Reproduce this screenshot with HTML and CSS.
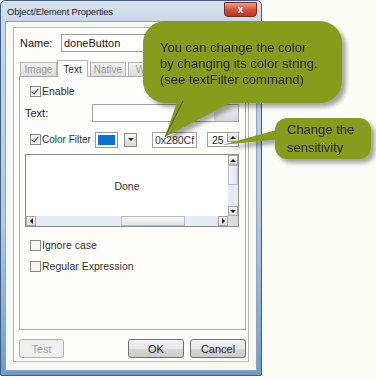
FILE: index.html
```html
<!DOCTYPE html>
<html>
<head>
<meta charset="utf-8">
<link rel="stylesheet" href="styles.css">
</head>
<body>
<div class="window">
  <div class="titlebar">
    <span class="title">Object/Element Properties</span>
    <span class="close">x</span>
  </div>
  <div class="client">
    <div class="panel">
      <div class="name-row">
        <span class="lbl">Name:</span>
        <div class="field name-field">doneButton</div>
      </div>
      <div class="tabs">
        <span class="tab">Image</span>
        <span class="tab active">Text</span>
        <span class="tab">Native</span>
        <span class="tab">Web</span>
      </div>
      <div class="tabpanel">
        <div class="check-row enable"><span class="cb checked"></span>Enable</div>
        <div class="text-row">
          <span class="lbl">Text:</span>
          <div class="field text-field"><span class="browse"></span></div>
        </div>
        <div class="color-row">
          <div class="check-row"><span class="cb checked"></span>Color Filter</div>
          <div class="swatch"><span class="fill"></span></div>
          <div class="dd"><span class="arrow-down"></span></div>
          <div class="field hex">0x280Cf</div>
          <div class="field spin">25<span class="spin-btn"><span class="arrow-up"></span></span></div>
        </div>
        <div class="textarea">
          <div class="ta-main">
            <div class="ta-content">Done</div>
            <div class="vscroll">
              <span class="sbtn"><span class="arrow-up"></span></span>
              <span class="vthumb"></span>
              <span class="vtrack"></span>
              <span class="sbtn"><span class="arrow-down"></span></span>
            </div>
          </div>
          <div class="hscroll">
            <span class="sbtn"><span class="arrow-left"></span></span>
            <span class="htrack1"></span>
            <span class="hthumb"></span>
            <span class="htrack2"></span>
            <span class="sbtn"><span class="arrow-right"></span></span>
            <span class="corner"></span>
          </div>
        </div>
        <div class="check-row ignore"><span class="cb"></span>Ignore case</div>
        <div class="check-row regex"><span class="cb"></span>Regular Expression</div>
      </div>
      <div class="buttons">
        <span class="btn disabled">Test</span>
        <span class="spacer"></span>
        <span class="btn ok">OK</span>
        <span class="btn">Cancel</span>
      </div>
    </div>
  </div>
</div>

<div class="bubble b1">
  <svg class="tail" width="90" height="45" viewBox="0 0 90 45">
    <path d="M35 0 L22 38 L95 0 Z" fill="#879c1d"/>
    <path d="M40 2 L22 38" stroke="#3b4210" stroke-width="0.8" fill="none"/>
  </svg>
  <div class="btext">You can change the color<br>by changing its color string.<br>(see textFilter command)</div>
</div>

<div class="bubble b2">
  <svg class="tail2" width="60" height="25" viewBox="0 0 60 25">
    <path d="M0 20 L58 4 L58 14 Z" fill="#879c1d"/>
  </svg>
  <div class="btext2">Change the<br>sensitivity</div>
</div>
</body>
</html>
```
FILE: styles.css
```css
html, body {
  margin: 0;
  padding: 0;
}
body {
  width: 376px;
  height: 378px;
  background: #fdfdf7;
  position: relative;
  overflow: hidden;
  font-family: "Liberation Sans", Arial, sans-serif;
  font-size: 11px;
  color: #1a1a1a;
}
.window {
  width: 262px;
  height: 376px;
  box-sizing: border-box;
  border: 1px solid #3f5f86;
  border-radius: 5px 5px 2px 2px;
  background: linear-gradient(to bottom, #d9e4ef 0, #c8d7e7 20px, #b3c8e0 60%, #6f99cf 100%);
  display: flex;
  flex-direction: column;
  padding: 0 4px 4px 4px;
}
.titlebar {
  height: 20px;
  display: flex;
  align-items: center;
  justify-content: space-between;
  flex-shrink: 0;
}
.title {
  font-size: 9.5px;
  color: #1d2430;
  padding-left: 2px;
  letter-spacing: -0.2px;
}
.close {
  width: 33px;
  height: 15px;
  margin-top: -4px;
  border: 1px solid #7a2a1a;
  border-radius: 0 0 4px 4px;
  background: linear-gradient(to bottom, #e9a08f 0, #d4553f 50%, #b53520 100%);
  color: #fff;
  font-weight: bold;
  font-size: 10px;
  display: flex;
  align-items: center;
  justify-content: center;
  box-sizing: border-box;
}
.client {
  flex: 1;
  background: #f8f8f3;
  border: 1px solid #8fa5bf;
  padding: 5px 9px 8px 7px;
  display: flex;
}
.panel {
  flex: 1;
  border: 1px solid #b9b9b4;
  background: #fdfdf9;
  padding: 6px 1px 3px 5px;
  display: flex;
  flex-direction: column;
}
.name-row {
  display: flex;
  align-items: center;
  height: 18px;
}
.lbl {
  width: 41px;
  padding-left: 1px;
}
.field {
  border: 1px solid #a2a2a2;
  background: #fff;
  box-sizing: border-box;
  display: flex;
  align-items: center;
  padding-left: 2px;
}
.name-field {
  flex: 1;
  height: 18px;
  margin-right: 2px;
}
.tabs {
  display: flex;
  align-items: flex-end;
  margin-top: 8px;
  height: 16px;
  padding-left: 1px;
}
.tab {
  height: 14px;
  box-sizing: border-box;
  border: 1px solid #b4b4b4;
  border-bottom: none;
  background: linear-gradient(#f1f1f1, #dcdcdc);
  color: #9a9a9a;
  font-size: 10px;
  display: flex;
  align-items: center;
  justify-content: center;
}
.tab:nth-child(1) { width: 37px; }
.tab:nth-child(2) { width: 31px; }
.tab:nth-child(3) { width: 36px; margin-left: 2px; }
.tab:nth-child(4) { width: 36px; margin-left: 2px; }
.tab.active {
  height: 17px;
  background: #fdfdf9;
  color: #333;
  margin-bottom: -1px;
  position: relative;
  z-index: 1;
}
.tabpanel {
  border: 1px solid #a9a9a9;
  height: 254px;
  box-sizing: border-box;
  margin-right: 1px;
  padding: 8px 6px 0 5px;
  display: flex;
  flex-direction: column;
}
.check-row {
  display: flex;
  align-items: center;
  height: 12px;
  font-size: 10.5px;
  color: #333;
  white-space: nowrap;
}
.enable { padding-left: 5px; }
.cb {
  width: 9px;
  height: 9px;
  border: 1px solid #8a8a8a;
  background: #f4f4f4;
  margin-right: 1px;
  position: relative;
  flex-shrink: 0;
}
.cb.checked::after {
  content: "";
  position: absolute;
  left: 2px;
  top: 0px;
  width: 3px;
  height: 6px;
  border: solid #2a4a8a;
  border-width: 0 1.5px 1.5px 0;
  transform: rotate(40deg);
}
.text-row {
  display: flex;
  align-items: center;
  margin-top: 7px;
  height: 18px;
}
.text-row .lbl {
  width: 67px;
  padding-left: 0;
  font-size: 11px;
}
.text-field {
  flex: 1;
  height: 18px;
  justify-content: flex-end;
  padding: 0;
}
.browse {
  width: 24px;
  height: 16px;
  background: linear-gradient(#eee, #d8d8d8);
}
.color-row {
  display: flex;
  align-items: center;
  margin-top: 9px;
  height: 17px;
  padding-left: 5px;
}
.color-row .check-row {
  width: 65px;
  flex-shrink: 0;
  font-size: 10px;
}
.swatch {
  width: 23px;
  height: 16px;
  border: 1px solid #999;
  box-sizing: border-box;
  padding: 2px;
  background: #fff;
  flex-shrink: 0;
}
.swatch .fill {
  display: block;
  width: 100%;
  height: 100%;
  background: #0b72cf;
}
.dd {
  width: 13px;
  height: 14px;
  margin-left: 6px;
  border: 1px solid #8a8a8a;
  box-sizing: border-box;
  background: linear-gradient(#f6f6f6, #d9d9d9);
  display: flex;
  align-items: center;
  justify-content: center;
  flex-shrink: 0;
}
.arrow-down {
  width: 0; height: 0;
  border-left: 3px solid transparent;
  border-right: 3px solid transparent;
  border-top: 3px solid #222;
}
.arrow-up {
  width: 0; height: 0;
  border-left: 3px solid transparent;
  border-right: 3px solid transparent;
  border-bottom: 3px solid #222;
}
.arrow-left {
  width: 0; height: 0;
  border-top: 3px solid transparent;
  border-bottom: 3px solid transparent;
  border-right: 3px solid #222;
}
.arrow-right {
  width: 0; height: 0;
  border-top: 3px solid transparent;
  border-bottom: 3px solid transparent;
  border-left: 3px solid #222;
}
.hex {
  margin-left: 15px;
  width: 45px;
  height: 16px;
  font-size: 10.5px;
  color: #333;
  flex-shrink: 0;
}
.spin {
  margin-left: 10px;
  width: 32px;
  height: 15px;
  font-size: 10.5px;
  padding-left: 4px;
  justify-content: space-between;
  padding-right: 0;
  flex-shrink: 0;
}
.spin-btn {
  width: 10px;
  height: 8px;
  align-self: flex-start;
  border-left: 1px solid #999;
  border-bottom: 1px solid #999;
  background: linear-gradient(#f3f3f3, #d5d5d5);
  display: flex;
  align-items: center;
  justify-content: center;
}
.textarea {
  margin-top: 6px;
  height: 73px;
  width: 214px;
  border: 1px solid #8c8c8c;
  box-sizing: border-box;
  display: flex;
  flex-direction: column;
  background: #fff;
}
.ta-main {
  flex: 1;
  display: flex;
}
.ta-content {
  flex: 1;
  display: flex;
  align-items: center;
  justify-content: center;
  color: #333;
  font-size: 10.5px;
}
.vscroll {
  width: 10px;
  display: flex;
  flex-direction: column;
  background: #e9eef5;
}
.sbtn {
  width: 10px;
  height: 10px;
  box-sizing: border-box;
  border: 1px solid #a7a7a7;
  background: linear-gradient(#fafafa, #dedede);
  display: flex;
  align-items: center;
  justify-content: center;
  flex-shrink: 0;
}
.vthumb {
  height: 20px;
  background: linear-gradient(to right, #f4f6f9, #dfe6ef);
  border: 1px solid #b7bec8;
  box-sizing: border-box;
}
.vtrack { flex: 1; background: #e4ebf4; }
.hscroll {
  height: 10px;
  display: flex;
  background: #e9eef5;
}
.htrack1 { width: 85px; background: #e4ebf4; }
.hthumb {
  width: 64px;
  background: linear-gradient(#f7f8fa, #dfe4ea);
  border: 1px solid #b7bec8;
  box-sizing: border-box;
}
.htrack2 { flex: 1; background: #e4ebf4; }
.corner { width: 10px; background: #dcdcdc; }
.ignore { margin-top: 12px; padding-left: 5px; }
.regex { margin-top: 9px; padding-left: 5px; }
.buttons {
  margin-top: auto;
  display: flex;
  gap: 6px;
  height: 19px;
  padding-right: 1px;
}
.spacer { flex: 1; }
.btn {
  width: 56px;
  height: 19px;
  box-sizing: border-box;
  border: 1px solid #707070;
  border-radius: 3px;
  background: linear-gradient(#f3f3f3 0, #e6e6e6 50%, #d6d6d6 51%, #cbcbcb 100%);
  display: flex;
  align-items: center;
  justify-content: center;
  font-size: 11px;
  color: #222;
}
.btn.disabled {
  width: 45px;
  border-color: #adb2b5;
  background: #f0f0f0;
  color: #a4a4a4;
}
.bubble {
  position: absolute;
  background: #879c1d;
  border-radius: 22px;
  filter: drop-shadow(4px 4px 2px rgba(0,0,0,0.35));
  color: #2b2b18;
  font-size: 13px;
}
.b1 {
  left: 143px;
  top: 21px;
  width: 199px;
  height: 82px;
}
.tail {
  position: absolute;
  left: 0;
  top: 78px;
}
.btext {
  position: absolute;
  left: 17px;
  top: 19px;
  line-height: 16px;
  white-space: nowrap;
}
.b2 {
  left: 275px;
  top: 118px;
  width: 96px;
  height: 41px;
  border-radius: 12px;
}
.tail2 {
  position: absolute;
  left: -53px;
  top: 7px;
}
.btext2 {
  position: absolute;
  left: 12px;
  top: 3px;
  line-height: 18px;
  white-space: nowrap;
}
```
